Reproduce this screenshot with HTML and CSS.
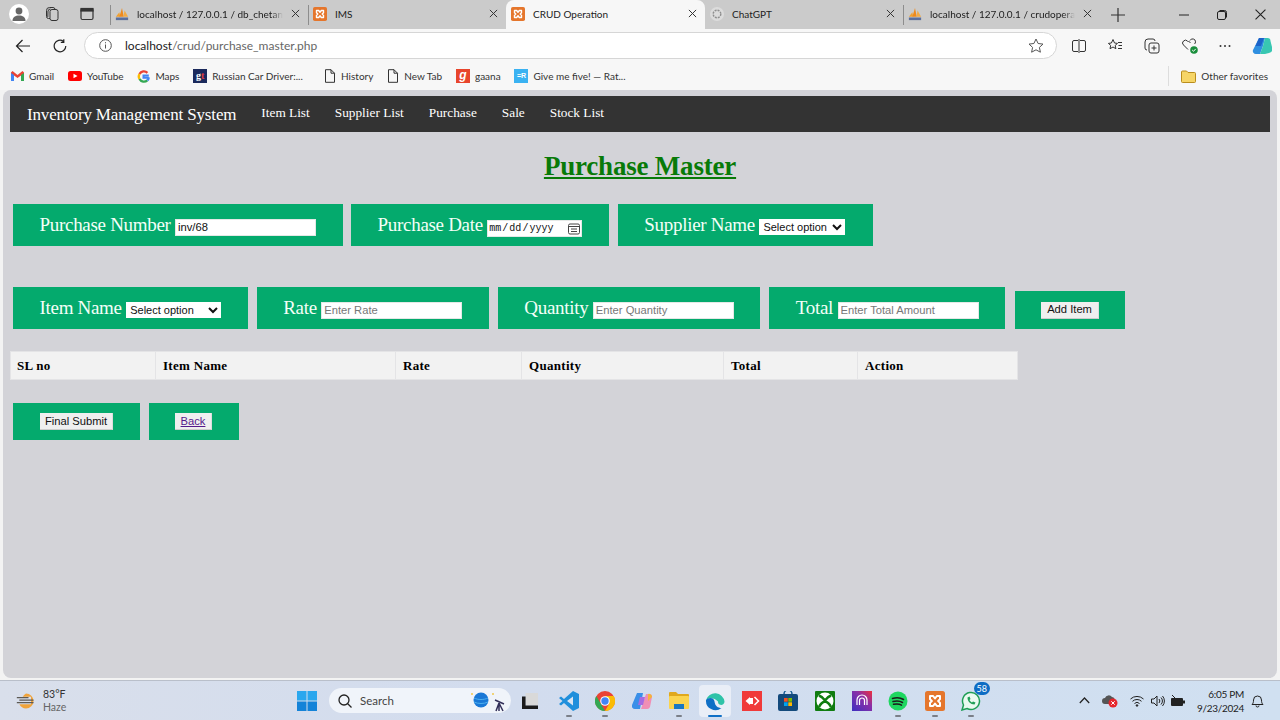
FILE: index.html
```html
<!DOCTYPE html>
<html lang="en">
<head>
<meta charset="utf-8">
<title>CRUD Operation</title>
<link rel="stylesheet" href="styles.css">
</head>
<body>
<svg class="defs" width="0" height="0" aria-hidden="true">
  <symbol id="pma" viewBox="0 0 16 16">
    <path d="M1 11 5 6l1 5z" fill="#f0a030"/><path d="M5 11 8 1l2 10z" fill="#ee8a1e"/><path d="M9.500 11 11 4l4 7z" fill="#f3ab45"/>
    <rect x="1" y="12" width="14" height="3" fill="#5c6f9c"/>
  </symbol>
  <symbol id="xampp" viewBox="0 0 16 16">
    <rect width="16" height="16" rx="2" fill="#e5762c"/>
    <path d="M4 4h2.500L8 6l1.500-2H12v2.500L10.500 8l1.500 1.500V12H9.500L8 10l-1.500 2H4V9.500L5.500 8 4 6.500z" fill="none" stroke="#fff" stroke-width="1.600" stroke-linejoin="round"/>
  </symbol>
  <symbol id="doc" viewBox="0 0 12 14">
    <path d="M1.500.700h5.500l3.500 3.500v9.100h-9zM7 .700v3.500h3.500" fill="none" stroke="#333" stroke-width="1"/>
  </symbol>
  <symbol id="close" viewBox="0 0 10 10">
    <path d="M1 1l8 8M9 1l-8 8" stroke="#333" stroke-width="1.100" fill="none"/>
  </symbol>
</svg>

<header class="tabstrip">
  <div class="strip-lead">
    <span class="avatar"><svg width="16" height="16" viewBox="0 0 16 16"><circle cx="8" cy="5" r="3.400" fill="#666"/><path d="M1.500 15c0-4 3-5.500 6.500-5.500s6.500 1.500 6.500 5.500z" fill="#666"/></svg></span>
    <svg class="lead-icon" width="16" height="16" viewBox="0 0 16 16" fill="none" stroke="#333"><rect x="6" y="3.500" width="8" height="11" rx="2"/><path d="M6 12.500H4.500a2 2 0 0 1-2-2v-6a3 3 0 0 1 3-3H9a2 2 0 0 1 2 2"/><path d="M3.800 11 4 5a2.500 2.500 0 0 1 2.500-2"/></svg>
    <svg class="lead-icon" width="14" height="14" viewBox="0 0 14 14" fill="none" stroke="#333" stroke-width="1.200"><rect x="1" y="1.500" width="12" height="11" rx="1.500"/><rect x="1" y="1.500" width="12" height="2.500" fill="#333"/></svg>
  </div>
  <div class="tab tab-sep"><svg class="fav"><use href="#pma"/></svg><span class="tab-title fade">localhost / 127.0.0.1 / db_chetan_</span><svg class="tab-x"><use href="#close"/></svg></div>
  <div class="tab tab-sep"><svg class="fav"><use href="#xampp"/></svg><span class="tab-title">IMS</span><svg class="tab-x"><use href="#close"/></svg></div>
  <div class="tab tab-active"><svg class="fav"><use href="#xampp"/></svg><span class="tab-title">CRUD Operation</span><svg class="tab-x"><use href="#close"/></svg></div>
  <div class="tab"><svg class="fav" viewBox="0 0 14 14"><circle cx="7" cy="7" r="7" fill="#dcdcdc"/><circle cx="7" cy="7" r="3.800" fill="none" stroke="#8f8f8f" stroke-width="1.400" stroke-dasharray="2 1"/></svg><span class="tab-title">ChatGPT</span><svg class="tab-x"><use href="#close"/></svg></div>
  <div class="tab tab-sep tab-sep-end"><svg class="fav"><use href="#pma"/></svg><span class="tab-title fade">localhost / 127.0.0.1 / crudoperat</span><svg class="tab-x"><use href="#close"/></svg></div>
  <svg class="newtab" width="14" height="14" viewBox="0 0 14 14"><path d="M7 0v14M0 7h14" stroke="#333" stroke-width="1.200"/></svg>
  <div class="winctl">
    <svg width="10" height="10" viewBox="0 0 10 10"><path d="M0 5h10" stroke="#222"/></svg>
    <svg width="10" height="10" viewBox="0 0 10 10" fill="none" stroke="#222"><rect x=".5" y="1.500" width="8" height="8" rx="1.500"/><path d="M2.500.500h5a2 2 0 0 1 2 2v5"/></svg>
    <svg width="11" height="11" viewBox="0 0 10 10"><path d="M.5.500l9 9M9.500.500l-9 9" stroke="#222" fill="none"/></svg>
  </div>
</header>

<nav class="toolbar">
  <svg class="tool tool-back" width="16" height="14" viewBox="0 0 16 14" fill="none" stroke="#222" stroke-width="1.200"><path d="M15 7H1.500M7.500 1 1.500 7l6 6"/></svg>
  <svg class="tool reload" width="14" height="14" viewBox="0 0 14 14" fill="none" stroke="#222" stroke-width="1.200"><path d="M12.800 7A5.800 5.800 0 1 1 10.500 2.400M10.800 .3v3h-3"/></svg>
  <div class="omnibox">
    <svg width="13" height="13" viewBox="0 0 13 13" fill="none" stroke="#555"><circle cx="6.500" cy="6.500" r="5.800"/><path d="M6.500 5.500v4M6.500 3.200v1.100"/></svg>
    <span class="url"><span class="url-host">localhost</span>/crud/purchase_master.php</span>
    <svg class="star" width="16" height="15" viewBox="0 0 16 15" fill="none" stroke="#555"><path d="M8 1l2.100 4.500 4.900.6-3.600 3.300 1 4.800L8 11.800l-4.400 2.400 1-4.800L1 6.100l4.900-.6z"/></svg>
  </div>
  <div class="tool-right">
    <svg width="14" height="14" viewBox="0 0 14 14" fill="none" stroke="#333"><path d="M6 1.500H2a1.500 1.500 0 0 0-1.500 1.500v8A1.500 1.500 0 0 0 2 12.500h4M8 1.500h4A1.500 1.500 0 0 1 13.500 3v8a1.500 1.500 0 0 1-1.500 1.500H8M7 0v14"/></svg>
    <svg width="16" height="15" viewBox="0 0 16 15" fill="none" stroke="#333"><path d="M6 1.500 7.500 5l3 .4-2.300 2 .7 3.300L6 9l-3 1.700.7-3.300-2.300-2 3-.4zM11 4.500h4M11.500 7.500h3.500M11 10.500h4"/></svg>
    <svg width="16" height="16" viewBox="0 0 16 16" fill="none" stroke="#333"><rect x="5" y="5" width="10" height="10" rx="2"/><path d="M10 7.500v5M7.500 10h5M3 12a2 2 0 0 1-2-2V4a3 3 0 0 1 3-3h5a2 2 0 0 1 2 2"/></svg>
    <svg class="heart" width="16" height="16" viewBox="0 0 16 16"><path d="M6 11.500 1.500 7a2.700 2.700 0 0 1 0-4 2.900 2.900 0 0 1 4 0L6 3.500l.5-.5 2 2M8 2.500a2.900 2.900 0 0 1 5.500 1.300c0 1-.4 1.700-1 2.200" fill="none" stroke="#333"/><circle cx="12" cy="12" r="3.800" fill="#1a8f3c"/><path d="M10.200 12l1.300 1.300 2.200-2.400" fill="none" stroke="#fff"/></svg>
    <svg width="12" height="4" viewBox="0 0 12 4" fill="#333"><circle cx="1.500" cy="2" r="1"/><circle cx="6" cy="2" r="1"/><circle cx="10.500" cy="2" r="1"/></svg>
    <svg width="20" height="20" viewBox="0 0 20 20"><path d="M7 2h6l-2 8-3 8H4a3 3 0 0 1-3-4z" fill="#2f8fe0"/><path d="M13 18H8l3-8 2-8h2.500a3 3 0 0 1 3 3L20 11a4 4 0 0 1-3 6z" fill="#38c7b2"/><path d="M7 2h5L9 10H3.500z" fill="#1c62c8"/></svg>
  </div>
</nav>

<nav class="bookmarks">
  <a class="bm"><svg width="13" height="10" viewBox="0 0 13 10"><path d="M0 1.500V10h3V4.500l3.500 2.500L10 4.500V10h3V1.500L11.500 0 6.500 4 1.500 0z" fill="#ea4335"/><path d="M0 2v8h3V4z" fill="#4285f4"/><path d="M10 4v6h3V2z" fill="#34a853"/></svg>Gmail</a>
  <a class="bm"><svg width="14" height="10" viewBox="0 0 14 10"><rect width="14" height="10" rx="2.500" fill="#f00"/><path d="M5.500 2.800v4.400L9.500 5z" fill="#fff"/></svg>YouTube</a>
  <a class="bm"><svg width="13" height="13" viewBox="0 0 13 13" fill="none" stroke-width="2.400"><path d="M11.800 5.500H6.500v2.200h5.300" stroke="#4285f4" stroke-width="2"/><path d="M10.400 2.800A5 5 0 0 0 2.500 4" stroke="#ea4335"/><path d="M2.500 4a5 5 0 0 0 0 5" stroke="#fbbc05"/><path d="M2.500 9a5 5 0 0 0 7.800 1.300" stroke="#34a853"/><path d="M10.300 10.300a5 5 0 0 0 1.500-3" stroke="#4285f4"/></svg>Maps</a>
  <a class="bm"><span class="gt">g<b>t</b></span>Russian Car Driver:...</a>
  <a class="bm bm-doc"><svg width="12" height="14"><use href="#doc"/></svg>History</a>
  <a class="bm"><svg width="12" height="14"><use href="#doc"/></svg>New Tab</a>
  <a class="bm"><span class="gaana">g</span>gaana</a>
  <a class="bm"><span class="fr">=R</span>Give me five! — Rat...</a>
  <a class="bm other"><svg width="15" height="13" viewBox="0 0 15 13"><path d="M.5 2a1 1 0 0 1 1-1h4l1.500 1.500h6.500a1 1 0 0 1 1 1v8a1 1 0 0 1-1 1h-12a1 1 0 0 1-1-1z" fill="#f6d566" stroke="#b98d1c"/></svg>Other favorites</a>
</nav>

<main class="page">
  <div class="navbar">
    <a class="brand">Inventory Management System</a>
    <a class="navlink">Item List</a>
    <a class="navlink">Supplier List</a>
    <a class="navlink">Purchase</a>
    <a class="navlink">Sale</a>
    <a class="navlink">Stock List</a>
  </div>
  <h1 class="title">Purchase Master</h1>
  <form class="form">
    <div class="row row-top">
      <label class="field">Purchase Number <input class="inp w140" type="text" value="inv/68"></label>
      <label class="field">Purchase Date <input class="inp date" type="date"></label>
      <label class="field f-sup">Supplier Name <select class="sel s86"><option>Select option</option></select></label>
    </div>
    <div class="row row-items">
      <label class="field">Item Name <select class="sel s94"><option>Select option</option></select></label>
      <label class="field">Rate <input class="inp w140" type="text" placeholder="Enter Rate"></label>
      <label class="field">Quantity <input class="inp w140" type="text" placeholder="Enter Quantity"></label>
      <label class="field">Total <input class="inp w140" type="text" placeholder="Enter Total Amount"></label>
      <div class="field action add"><button class="btn btn-wide" type="button">Add Item</button></div>
    </div>
    <table class="grid">
      <colgroup><col class="c1"><col class="c2"><col class="c3"><col class="c4"><col class="c5"><col class="c6"></colgroup>
      <thead><tr><th>SL no</th><th>Item Name</th><th>Rate</th><th>Quantity</th><th>Total</th><th>Action</th></tr></thead>
    </table>
    <div class="row row-actions">
      <div class="field action a127"><button class="btn" type="button">Final Submit</button></div>
      <div class="field action a90"><button class="btn btn-back" type="button"><a class="back" href="#">Back</a></button></div>
    </div>
  </form>
</main>

<footer class="taskbar">
  <div class="weather">
    <svg width="20" height="18" viewBox="0 0 24 20"><path d="M12 1a9 9 0 0 1 0 18 9 9 0 0 1-8-5h14V5H8a9 9 0 0 1 4-4z" fill="#f0a33a"/><path d="M1 6h14M4 9h17M1 12h20" stroke="#5d5a55" stroke-width="1.500"/></svg>
    <div class="weather-text"><span>83°F</span><span class="haze">Haze</span></div>
  </div>
  <div class="task-center">
    <div class="ti"><svg width="20" height="20" viewBox="0 0 20 20"><rect width="9.500" height="9.500" fill="#2aa7ee"/><rect x="10.500" width="9.500" height="9.500" fill="#2aa7ee"/><rect y="10.500" width="9.500" height="9.500" fill="#1483d8"/><rect x="10.500" y="10.500" width="9.500" height="9.500" fill="#1483d8"/></svg></div>
    <div class="search">
      <svg width="14" height="14" viewBox="0 0 14 14" fill="none" stroke="#222" stroke-width="1.300"><circle cx="6" cy="6" r="5"/><path d="M9.500 9.500 13.500 13.500"/></svg>
      <span>Search</span>
      <svg class="scope" width="42" height="22" viewBox="0 0 42 22"><circle cx="12" cy="10" r="7.500" fill="#1a78d6"/><path d="M5 8c4 2 10 2 14 0M5 12c4 2 10 2 14 0" stroke="#4eb0ee" fill="none"/><circle cx="3" cy="4" r="1" fill="#f2c84b"/><circle cx="24" cy="4" r="1" fill="#f2c84b"/><path d="M26 10l9 4M30 13l-3 8M30 13l4 8M30 13v8" stroke="#33305a" stroke-width="1.500"/></svg>
    </div>
    <div class="ti ti-desk"><svg width="16" height="16" viewBox="0 0 18 18"><rect x="4" width="14" height="14" fill="#d9d9d9"/><path d="M0 4h4v10h14v4H0z" fill="#1b1b1b"/></svg></div>
    <div class="ti on"><svg width="20" height="20" viewBox="0 0 20 20"><path d="M14 0 20 3v14l-6 3-9-8-3 2.500L0 13l3.500-3L0 7l2-1.500L5 8z" fill="#1f8fdc"/><path d="M14 5.500 8 10l6 4.500z" fill="#dbe5f2"/></svg><i></i></div>
    <div class="ti on"><svg width="20" height="20" viewBox="0 0 20 20"><circle cx="10" cy="10" r="10" fill="#ea4335"/><path d="M10 20a10 10 0 0 1-8.700-15L6 13z" fill="#34a853"/><path d="M10 5h8.700A10 10 0 0 1 10 20l4-7z" fill="#fbbc05"/><circle cx="10" cy="10" r="4.800" fill="#fff"/><circle cx="10" cy="10" r="3.700" fill="#4285f4"/></svg><i></i></div>
    <div class="ti"><svg width="20" height="20" viewBox="0 0 20 20"><path d="M5 2h6L8 18H3a3 3 0 0 1-3-4z" fill="#3a8fe8"/><path d="M9 18h6a3 3 0 0 0 3-2l2-10a3 3 0 0 0-3-3h-3z" fill="#f08fb5"/><path d="M8 6h5l-2 8H6z" fill="#a66be0"/><path d="M16 3a3 3 0 0 1 4 3l-4 4z" fill="#f4b43a"/></svg></div>
    <div class="ti on"><svg width="20" height="17" viewBox="0 0 20 17"><path d="M0 1a1 1 0 0 1 1-1h6l2 2h10a1 1 0 0 1 1 1v2H0z" fill="#e0a81e"/><rect y="4" width="20" height="13" rx="1" fill="#fbd44f"/><rect x="5" y="12" width="10" height="5" fill="#1a78c2"/></svg><i></i></div>
    <div class="ti active"><svg width="20" height="20" viewBox="0 0 20 20"><path d="M1 9a9.500 9.500 0 0 1 18.500 1.500c0 3-3 4-5 3-1-.5-1.500-1.500-1.500-3C10 7 4 6 1 9z" fill="#2fc3a8"/><path d="M1 9c2-3 8-3 8.500 1.500C10 15 13 17 16.500 17A9.500 9.500 0 0 1 1 9z" fill="#0f6fc6"/></svg><i></i></div>
    <div class="ti"><svg width="20" height="20" viewBox="0 0 20 20"><rect width="20" height="20" fill="#f03a3a"/><path d="M3.500 10 8 6v8zM8 7h3v6H8z" fill="#fff"/><path d="M12.500 6l4 4-4 4" fill="none" stroke="#fff" stroke-width="1.500"/></svg></div>
    <div class="ti"><svg width="20" height="20" viewBox="0 0 20 20"><path d="M6 3a4 4 0 0 1 8 0" fill="none" stroke="#1d5f96" stroke-width="1.500"/><rect y="3" width="20" height="17" rx="2" fill="#134a7c"/><rect x="6" y="7" width="3.700" height="3.700" fill="#f25022"/><rect x="10.300" y="7" width="3.700" height="3.700" fill="#7fba00"/><rect x="6" y="11.300" width="3.700" height="3.700" fill="#00a4ef"/><rect x="10.300" y="11.300" width="3.700" height="3.700" fill="#ffb900"/></svg></div>
    <div class="ti"><svg width="20" height="20" viewBox="0 0 20 20"><rect width="20" height="20" rx="1" fill="#107c10"/><circle cx="10" cy="10" r="8.500" fill="#fff"/><path d="M4 4.500C8 6 9 8 10 9.500 11 8 12 6 16 4.500M4 16C6 12 8 11 10 10.500 12 11 14 12 16 16" fill="none" stroke="#107c10" stroke-width="2.500"/></svg></div>
    <div class="ti"><svg width="20" height="20" viewBox="0 0 20 20"><defs><linearGradient id="pv" x1="0" y1="1" x2="1" y2="0"><stop offset="0" stop-color="#3d2fc0"/><stop offset=".6" stop-color="#8a2fa8"/><stop offset="1" stop-color="#f0303a"/></linearGradient></defs><rect width="20" height="20" fill="url(#pv)"/><path d="M5 14V9a5 5 0 0 1 10 0v5M7.500 14V9.500a2.500 2.500 0 0 1 5 0V14" fill="none" stroke="#fff" stroke-width="1.200"/></svg></div>
    <div class="ti on"><svg width="20" height="20" viewBox="0 0 20 20"><circle cx="10" cy="10" r="9.500" fill="#1ed760"/><path d="M4.500 7.500c4-1 8-.8 11 1M5 10.500c3.500-.8 7-.6 9.500 1M5.500 13.300c3-.6 6-.4 8 .8" fill="none" stroke="#1b1b1b" stroke-width="1.500" stroke-linecap="round"/></svg><i></i></div>
    <div class="ti on"><svg width="20" height="20"><use href="#xampp"/></svg><i></i></div>
    <div class="ti on wa">
      <svg width="20" height="20" viewBox="0 0 20 20"><path d="M1 19l1.500-5A8.500 8.500 0 1 1 6 17.500z" fill="#eafaf0" stroke="#1f9e55" stroke-width="1.500"/><path d="M6.500 6.500c0 4 3 7 7 7l1-2-2.500-1-1 1c-1-.5-2-1.500-2.500-2.500l1-1-1-2.500z" fill="#1f9e55"/></svg>
      <span class="badge">58</span><i></i>
    </div>
  </div>
  <div class="tray">
    <svg width="11" height="7" viewBox="0 0 11 7" fill="none" stroke="#222" stroke-width="1.200"><path d="M.8 6 5.500 1l4.700 5"/></svg>
    <svg class="cloud" width="16" height="15" viewBox="0 0 16 15"><path d="M3 11a3 3 0 0 1 0-6 4 4 0 0 1 7-1 3 3 0 0 1 2 5v2z" fill="#555"/><circle cx="11" cy="10" r="4.500" fill="#e6262c"/><path d="M9.300 8.300l3.400 3.400M12.700 8.300l-3.400 3.400" stroke="#fff"/></svg>
    <svg class="wifi" width="14" height="12" viewBox="0 0 14 12" fill="none" stroke="#222"><path d="M.5 4a9.500 9.500 0 0 1 13 0M2.500 6.300a6.500 6.500 0 0 1 9 0M4.500 8.500a3.500 3.500 0 0 1 5 0"/><circle cx="7" cy="10.500" r=".8" fill="#222"/></svg>
    <svg class="vol" width="14" height="12" viewBox="0 0 14 12" fill="none" stroke="#222"><path d="M.5 4v4H3l3 3V1L3 4zM8 4a3 3 0 0 1 0 4M10 2.500a5 5 0 0 1 0 7M11.500 1a7.500 7.500 0 0 1 0 10"/></svg>
    <svg class="batt" width="14" height="12" viewBox="0 0 14 12"><rect y="3" width="12" height="8" rx="1" fill="#222"/><rect x="12" y="5.500" width="2" height="3" fill="#222"/><path d="M1 0l3 3" stroke="#222"/></svg>
    <div class="clock"><span>6:05 PM</span><span>9/23/2024</span></div>
    <svg class="bell" width="13" height="14" viewBox="0 0 13 14" fill="none" stroke="#222"><path d="M1 10.500c1-1 1.500-2 1.500-4.500a4 4 0 0 1 8 0c0 2.500.5 3.500 1.500 4.500zM5 11.500a1.500 1.500 0 0 0 3 0"/></svg>
  </div>
</footer>
</body>
</html>
```
FILE: styles.css
```css
* { box-sizing: border-box; }
html, body { margin: 0; height: 100%; overflow: hidden; }
body {
  width: 1280px; height: 720px;
  display: flex; flex-direction: column;
  background: #f3f3f3;
  font-family: Lato, "Noto Sans", sans-serif;
  color: #222;
}
.defs { position: absolute; }

/* tab strip */
.tabstrip {
  height: 29px; flex: none;
  display: flex; align-items: stretch;
  background: #cbcbcb;
  font-size: 10px;
}
.strip-lead { width: 110px; display: flex; align-items: center; padding-left: 9px; padding-bottom: 1px; }
.avatar {
  width: 20px; height: 20px; border-radius: 50%; background: #fff;
  display: flex; align-items: center; justify-content: center;
}
.lead-icon { margin-left: 15px; }
.lead-icon + .lead-icon { margin-left: 20px; }
.tab {
  width: 198px; flex: none;
  display: flex; align-items: center; gap: 8px;
  padding: 0 8px 2px 5px;
}
.tab-sep { background: linear-gradient(#8d8d8d, #8d8d8d) left center / 1px 20px no-repeat; }
.tab-sep-end { width: 197px; }
.tab-active { background: #f7f7f7; border-radius: 8px 8px 0 0; width: 199px; }
.fav { width: 14px; height: 14px; flex: none; }
.tab-title { flex: 1; min-width: 0; white-space: nowrap; }
.fade {
  -webkit-mask-image: linear-gradient(90deg, #000 92%, transparent);
  mask-image: linear-gradient(90deg, #000 92%, transparent);
}
.tab-x { width: 9px; height: 9px; flex: none; }
.newtab { align-self: center; margin-left: 11px; }
.winctl {
  margin-left: auto; width: 87px; margin-right: 14px;
  display: flex; align-items: center; justify-content: space-between;
}

/* toolbar */
.toolbar {
  height: 33px; flex: none;
  display: flex; align-items: center;
  background: #f7f7f7;
  padding: 0 8px 0 15px;
}
.tool-back { margin-right: 22px; }
.reload { margin-right: 17px; }
.omnibox {
  width: 973px; height: 27px;
  display: flex; align-items: center;
  background: #fff; border: 1px solid #d6d6d6; border-radius: 14px;
  padding: 0 12px 0 14px;
  font-size: 12px;
  color: #666;
}
.url { margin-left: 13px; flex: 1; }
.url-host { color: #1c1c1c; }
.tool-right {
  flex: 1; margin-left: 15px;
  display: flex; align-items: center; justify-content: space-between;
}

/* bookmarks */
.bookmarks {
  height: 28px; flex: none;
  display: flex; align-items: center;
  background: #f7f7f7;
  padding: 0 12px 0 11px;
  font-size: 10px;
  gap: 13.800px;
}
.bm { display: flex; align-items: center; gap: 5px; white-space: nowrap; color: #333; }
.bm-doc { margin-left: 7.500px; }
.gt {
  width: 14px; height: 14px; background: #1b2a5c; color: #fff;
  font: bold 10px/14px "Liberation Serif", serif; text-align: center;
}
.gt b { color: #e23b3b; }
.gaana {
  width: 14px; height: 14px; background: #e8452c; color: #fff;
  font: italic bold 12px/13px "Liberation Sans", sans-serif; text-align: center;
}
.fr {
  width: 14px; height: 14px; background: #3ab2f2; color: #fff;
  font: bold 7px/14px "Liberation Sans", sans-serif; text-align: center;
}
.other { margin-left: auto; padding-left: 12px; border-left: 1px solid #ddd; height: 20px; }

/* page */
.page {
  height: 588px; flex: none;
  margin: 0 3px;
  padding: 6px 7px;
  background: #d3d3d8;
  border-radius: 8px;
  font-family: "Liberation Serif", "Times New Roman", serif;
}
.navbar {
  height: 36px;
  display: flex; align-items: center;
  background: #333;
  color: #fff;
  padding-left: 17px;
}
.brand { font-size: 17px; letter-spacing: -.15px; margin-right: 25px; padding-top: 2px; }
.navlink { font-size: 13.300px; margin-right: 25px; padding-bottom: 2px; }
.title {
  margin: 18px 0 22px;
  font-size: 27px; letter-spacing: -.2px; line-height: 32px; font-weight: bold;
  text-align: center; text-decoration: underline;
  color: #087a08;
}
.form { margin: 0; }
.row { display: flex; align-items: flex-start; gap: 8.500px; margin-left: 3px; }
.row-top { margin-bottom: 41px; }
.row-items { margin-bottom: 22px; gap: 9px; }
.row-actions { margin-top: 23px; }
.field {
  display: block;
  height: 42px;
  background: #04aa6d;
  color: #f4fff8;
  font-size: 19px;
  letter-spacing: -.3px;
  line-height: 42px;
  padding: 0 26.500px;
  white-space: nowrap;
}
.f-sup { margin-left: .5px; padding-right: 27.500px; }
.inp, .sel, .btn { letter-spacing: 0; vertical-align: baseline; font-family: "Liberation Sans", Arial, sans-serif; font-size: 11.200px; color: #111; }
.inp {
  height: 17px; background: #fff; padding: 0 2px;
  border: 1px solid #e4e8e6; margin: 0;
}
.inp::placeholder { color: #777; }
.w140 { width: 141px; }
.date { width: 95px; padding: 0; font-family: "Liberation Mono", monospace; font-size: 10px; }
.date::-webkit-calendar-picker-indicator {
  width: 12px; height: 12px; padding: 0; margin: 0 1px 0 0;
  background: url("data:image/svg+xml,%3Csvg xmlns='http://www.w3.org/2000/svg' viewBox='0 0 12 12' fill='none' stroke='%23444'%3E%3Crect x='.5' y='1' width='11' height='10' rx='1.500'/%3E%3Cpath d='M.5 3.500h11M3 6h6M3 8.500h6' /%3E%3C/svg%3E") center / contain no-repeat;
}
.sel { height: 16px; background: #fff; border: 0; padding: 0; margin: 0; font-size: 11px; }
.s86 { width: 86px; }
.s94 { width: 95px; }
.action {
  height: 38px; padding: 0; display: flex; align-items: center; justify-content: center;
}
.add { margin-top: 4px; margin-left: 1px; width: 110px; }
.row-actions .action { height: 37px; }
.a127 { width: 127px; }
.a90 { width: 90px; }
.btn {
  height: 17px; padding: 0 5px; margin: 0;
  background: #efefef; border: 0; border-bottom: 1px solid #ccc;
  border-right: 1px solid #ddd;
  line-height: 15px;
}
.btn-wide { padding: 0 6.500px; }
.btn-back { padding: 0 6px; }
.back { color: #551a8b; }
.grid {
  width: 1007px; height: 29px;
  table-layout: fixed;
  border-collapse: collapse;
  background: #f2f2f2;
}
.grid th {
  padding: 0 7px;
  text-align: left;
  font-size: 13px; letter-spacing: .3px;
  color: #000;
  border: 1px solid #e4e4e6;
}
.grid th:first-child { padding-left: 6px; }
.c1 { width: 145px; }
.c2 { width: 240px; }
.c3 { width: 126px; }
.c4 { width: 202px; }
.c5 { width: 134px; }
.c6 { width: 160px; }

/* taskbar */
.taskbar {
  margin-top: 2px;
  height: 40px; flex: none;
  display: flex; align-items: center;
  background: linear-gradient(90deg, #d9dfeb, #d2dcee 40%, #d0e0f1);
  border-top: 1px solid #b9bfca;
  font-size: 10.500px;
}
.weather { width: 297px; display: flex; align-items: center; gap: 7px; padding-left: 16px; }
.weather-text { display: flex; flex-direction: column; line-height: 13px; color: #333; }
.haze { color: #666; }
.task-center { display: flex; align-items: center; height: 100%; }
.ti {
  width: 36.600px; height: 34px;
  display: flex; flex-direction: column; align-items: center; justify-content: center;
  position: relative;
}
.ti:first-child { width: 20px; margin-right: 12px; }
.ti-desk { margin-right: 2px; margin-left: 1px; }
.ti i {
  position: absolute; bottom: 1px; left: 50%;
  width: 6px; height: 2px; margin-left: -3px;
  background: #7a7f88; border-radius: 1px;
}
.active { width: 32px; height: 32px; margin: 0 2.300px; background: #e9eef7; border-radius: 4px; }
.active i { width: 14px; margin-left: -7px; bottom: 0; background: #0f6fc6; }
.search {
  width: 182px; height: 25px;
  display: flex; align-items: center; gap: 8px;
  padding-left: 9px;
  background: #f0f4fa; border-radius: 13px;
  font-size: 11.500px; color: #444;
}
.scope { margin-left: auto; }
.badge {
  position: absolute; top: -2px; right: 0;
  min-width: 16px; height: 13px; border-radius: 7px;
  background: #0d6cc4; color: #fff;
  font-size: 9px; line-height: 13px; text-align: center;
}
.tray { margin-left: auto; display: flex; align-items: center; padding-right: 16px; }
.cloud { margin-left: 12px; }
.wifi { margin-left: 12px; }
.vol { margin-left: 7px; }
.batt { margin-left: 6px; }
.clock {
  display: flex; flex-direction: column; align-items: flex-end;
  margin-left: 12px; line-height: 14px; color: #222;
  font-size: 10px; letter-spacing: -.3px;
}
.bell { margin-left: 7px; }
```
